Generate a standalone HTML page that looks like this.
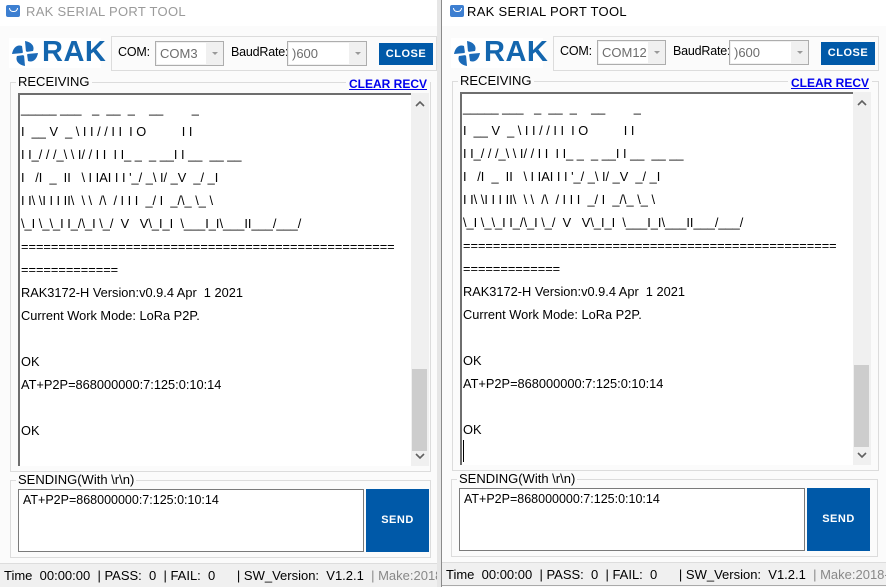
<!DOCTYPE html>
<html><head><meta charset="utf-8">
<style>
*{margin:0;padding:0;box-sizing:border-box}
body{width:886px;height:587px;overflow:hidden;background:#fff;font-family:"Liberation Sans","Noto Sans CJK SC",sans-serif;position:relative}
.win{position:absolute;top:0;width:445px;height:587px;background:#fbfbfb;overflow:hidden}
.a{position:absolute}
.title{left:0;top:0;width:100%;height:26px;background:#fff}
.title span{position:absolute;left:26px;top:4px;font-size:13px;letter-spacing:0.3px}
.ticon{left:6px;top:5px;width:14px;height:12px;background:#3d7fd1;border-radius:2px}
.ticon:after{content:"";position:absolute;left:3px;top:3px;width:7px;height:3px;border:1.5px solid #fff;border-top:none;border-radius:0 0 4px 4px}
.logo{left:9px;top:38px;width:92px;height:30px;background:#fff}
.logo b{position:absolute;left:33px;top:-2px;font-size:29px;color:#1466ae;font-weight:bold;letter-spacing:0.5px}
.gb{border:1px solid #dcdcdc}
.lbl{font-size:13px;color:#000;background:#fbfbfb;padding:0 2px}
.combo{border:1px solid #adadad;background:#f0f0f0;height:25px;font-size:13px;color:#6d6d6d}
.combo i{position:absolute;right:0;top:0;width:16px;height:23px;background:#f0f0f0}
.combo i:after{content:"";position:absolute;left:5px;top:10px;border:3px solid transparent;border-top:3px solid #999}
.combo .w{position:absolute;left:1px;top:1px;bottom:1px;background:#fff;padding-left:3px;line-height:21px}
.btn{background:#0059a8;color:#fff;font-weight:bold;font-size:11px;text-align:center;letter-spacing:0.5px}
.ta{left:18px;top:93px;width:411px;height:373px;background:#fff;border-left:2px solid #6e6e6e;border-top:2px solid #6e6e6e}
.txt{position:absolute;left:1px;top:2px;font-size:12.8px;line-height:23px;white-space:pre;color:#000}
.sb{left:411px;top:93px;width:18px;height:373px;background:#f0f0f0}
.thumb{left:412px;width:15px;height:82px;background:#cdcdcd}
.arr{left:414px;width:12px;height:8px}
.status{left:0;top:563px;width:100%;height:24px;background:#f0f0f0;border-top:1px solid #ddd;font-size:13px;white-space:pre;padding-left:4px;line-height:24px}
.bl{font-size:12.5px;letter-spacing:-0.2px}
</style></head><body>

<!-- LEFT WINDOW -->
<div class="win" style="left:0">
 <div class="a title"><div class="a ticon"></div><span style="color:#9a9a9a">RAK SERIAL PORT TOOL</span></div>
 <div class="a logo"><svg class="a" style="left:2px;top:2px" width="28" height="27" viewBox="0 0 28 27"><g fill="#1b6ab8"><path d="M14 1 C20 2 24 6 22 11 L15 12 Z"/><path d="M27 13 C26 19 22 23 17 21 L16 14 Z"/><path d="M14 26 C8 25 4 21 6 16 L13 15 Z"/><path d="M1 14 C2 8 6 4 11 6 L12 13 Z"/></g><circle cx="14" cy="13.5" r="2.5" fill="#fff"/></svg><b>RAK</b></div>
 <div class="a gb" style="left:111px;top:36px;width:326px;height:35px"></div>
 <div class="a bl" style="left:118px;top:45px">COM:</div>
 <div class="a combo" style="left:155px;top:41px;width:69px"><div class="w" style="right:17px">COM3</div><i></i></div>
 <div class="a bl" style="left:231px;top:45px">BaudRate:</div>
 <div class="a combo" style="left:287px;top:41px;width:80px"><div class="w" style="right:17px">)600</div><i></i></div>
 <div class="a btn" style="left:379px;top:43px;width:54px;height:22px;line-height:22px">CLOSE</div>

 <div class="a gb" style="left:10px;top:82px;width:421px;height:390px"></div>
 <div class="a lbl" style="left:16px;top:74px">RECEIVING</div>
 <div class="a" style="left:346px;top:77px;font-size:12px;font-weight:bold;color:#0000ee;text-decoration:underline;background:#fbfbfb;padding:0 3px">CLEAR RECV</div>
 <div class="a ta"><div class="txt">_____ ___   _  __  _    __        _
I  __ V  _ \ I I / / I I  I O          I I
I I_/ / /_\ \ I/ / I I  I I_ _  _ __I I __  __ __
I   /I  _  II   \ I IAI I I '_/ _\ I/ _V  _/ _I
I I\ \I I I II\  \ \  /\  / I I I  _/ I  _/\_ \_ \
\_I \_\_I I_/\_I \_/  V   V\_I_I  \___I_I\___II___/___/
==================================================
=============
RAK3172-H Version:v0.9.4 Apr  1 2021
Current Work Mode: LoRa P2P.

OK
AT+P2P=868000000:7:125:0:10:14

OK</div></div>
 <div class="a sb"></div>
 <div class="a thumb" style="top:369px"></div>
 <svg class="a arr" style="top:100px" viewBox="0 0 12 8"><path d="M2 6 L6 2 L10 6" fill="none" stroke="#606060" stroke-width="1.6"/></svg>
 <svg class="a arr" style="top:452px" viewBox="0 0 12 8"><path d="M2 2 L6 6 L10 2" fill="none" stroke="#606060" stroke-width="1.6"/></svg>

 <div class="a gb" style="left:10px;top:480px;width:421px;height:78px"></div>
 <div class="a lbl" style="left:16px;top:472px">SENDING(With \r\n)</div>
 <div class="a" style="left:18px;top:489px;width:346px;height:63px;background:#fff;border:1px solid #7a7a7a;font-size:12.5px;padding:3px 4px">AT+P2P=868000000:7:125:0:10:14</div>
 <div class="a btn" style="left:366px;top:489px;width:63px;height:63px;line-height:63px">SEND</div>

 <div class="a status">Time  00:00:00  | PASS:  0  | FAIL:  0      | SW_Version:  V1.2.1  <span style="color:#888">| Make:2018-12</span></div>
 <div class="a" style="left:437px;top:0;width:8px;height:587px;background:#e6e6e6"></div>
</div>

<!-- RIGHT WINDOW -->
<div class="win" style="left:441px;border-left:1px solid #8a8a8a">
 <div class="a title"><div class="a ticon" style="left:8px"></div><span style="color:#000;left:25px">RAK SERIAL PORT TOOL</span></div>
 <div class="a logo"><svg class="a" style="left:2px;top:2px" width="28" height="27" viewBox="0 0 28 27"><g fill="#1b6ab8"><path d="M14 1 C20 2 24 6 22 11 L15 12 Z"/><path d="M27 13 C26 19 22 23 17 21 L16 14 Z"/><path d="M14 26 C8 25 4 21 6 16 L13 15 Z"/><path d="M1 14 C2 8 6 4 11 6 L12 13 Z"/></g><circle cx="14" cy="13.5" r="2.5" fill="#fff"/></svg><b>RAK</b></div>
 <div class="a gb" style="left:111px;top:36px;width:326px;height:35px"></div>
 <div class="a bl" style="left:118px;top:44px">COM:</div>
 <div class="a combo" style="left:155px;top:40px;width:69px"><div class="w" style="right:17px">COM12</div><i></i></div>
 <div class="a bl" style="left:231px;top:44px">BaudRate:</div>
 <div class="a combo" style="left:287px;top:40px;width:80px"><div class="w" style="right:17px">)600</div><i></i></div>
 <div class="a btn" style="left:379px;top:42px;width:54px;height:23px;line-height:23px">CLOSE</div>

 <div class="a gb" style="left:10px;top:81px;width:427px;height:390px"></div>
 <div class="a lbl" style="left:16px;top:73px">RECEIVING</div>
 <div class="a" style="left:346px;top:76px;font-size:12px;font-weight:bold;color:#0000ee;text-decoration:underline;background:#fbfbfb;padding:0 3px">CLEAR RECV</div>
 <div class="a ta" style="top:92px"><div class="txt">_____ ___   _  __  _    __        _
I  __ V  _ \ I I / / I I  I O          I I
I I_/ / /_\ \ I/ / I I  I I_ _  _ __I I __  __ __
I   /I  _  II   \ I IAI I I '_/ _\ I/ _V  _/ _I
I I\ \I I I II\  \ \  /\  / I I I  _/ I  _/\_ \_ \
\_I \_\_I I_/\_I \_/  V   V\_I_I  \___I_I\___II___/___/
==================================================
=============
RAK3172-H Version:v0.9.4 Apr  1 2021
Current Work Mode: LoRa P2P.

OK
AT+P2P=868000000:7:125:0:10:14

OK</div><div class="a" style="left:1px;top:346px;width:1px;height:22px;background:#000"></div></div>
 <div class="a sb" style="top:92px"></div>
 <div class="a thumb" style="top:365px"></div>
 <svg class="a arr" style="top:99px" viewBox="0 0 12 8"><path d="M2 6 L6 2 L10 6" fill="none" stroke="#606060" stroke-width="1.6"/></svg>
 <svg class="a arr" style="top:451px" viewBox="0 0 12 8"><path d="M2 2 L6 6 L10 2" fill="none" stroke="#606060" stroke-width="1.6"/></svg>

 <div class="a gb" style="left:9px;top:479px;width:427px;height:78px"></div>
 <div class="a lbl" style="left:15px;top:471px">SENDING(With \r\n)</div>
 <div class="a" style="left:17px;top:488px;width:346px;height:63px;background:#fff;border:1px solid #7a7a7a;font-size:12.5px;padding:3px 4px">AT+P2P=868000000:7:125:0:10:14</div>
 <div class="a btn" style="left:365px;top:488px;width:63px;height:63px;line-height:63px">SEND</div>

 <div class="a status" style="top:562px;border-bottom:1px solid #aaa">Time  00:00:00  | PASS:  0  | FAIL:  0      | SW_Version:  V1.2.1  <span style="color:#888">| Make:2018-12</span></div>
</div>
</body></html>
